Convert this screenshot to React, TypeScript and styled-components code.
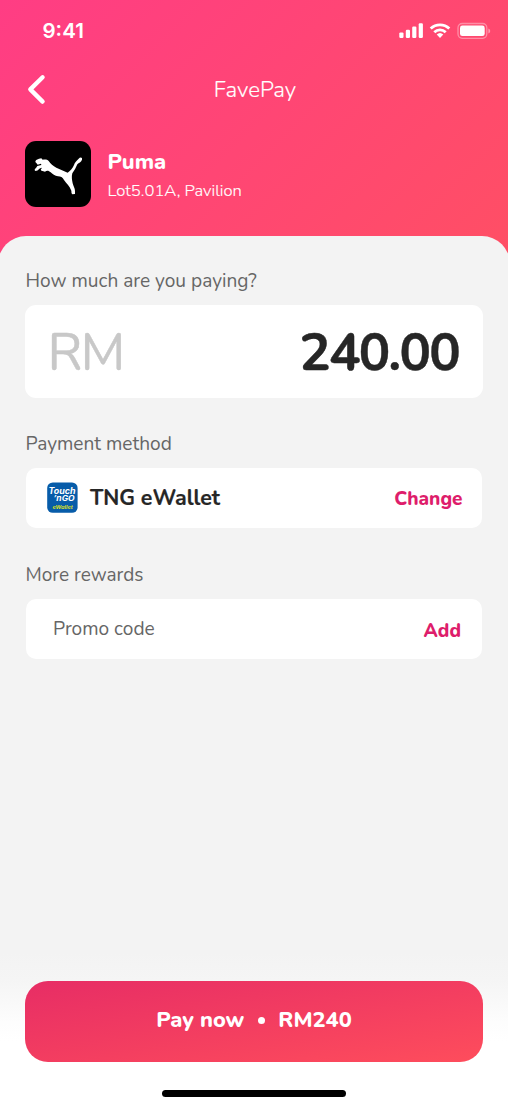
import React from "react";
import styled, { createGlobalStyle } from "styled-components";

const GlobalStyle = createGlobalStyle`
  *, *::before, *::after { box-sizing: border-box; }
  body { margin: 0; background: #fff; }
  button { border: 0; padding: 0; background: none; font: inherit; color: inherit; }
`;

const Screen = styled.div`
  width: 508px;
  height: 1106px;
  overflow: hidden;
  display: flex;
  flex-direction: column;
  background: linear-gradient(135deg, #ff3d84 0%, #ff4f64 100%) top / 100% 270px no-repeat, #fff;
  font-family: Nunito, Lato, "Open Sans", sans-serif;
`;

const StatusBar = styled.div`
  height: 60px;
  display: flex;
  align-items: center;
  justify-content: space-between;
  padding: 1px 17px 0 42.5px;
  color: #fff;
`;

const Clock = styled.span`
  font: 600 20.5px/24px Inter, sans-serif;
  letter-spacing: 0;
`;

const NavBar = styled.header`
  height: 58px;
  display: grid;
  grid-template-columns: 74px 1fr 74px;
  align-items: center;
  color: #fff;
`;

const BackButton = styled.button`
  width: 24px;
  height: 32px;
  margin-left: 25px;
  svg { display: block; }
`;

const Text = styled.span<{
  $size: number;
  $weight?: number;
  $color?: string;
  $track?: number;
  $stroke?: number;
}>`
  display: block;
  white-space: nowrap;
  font-size: ${(p) => p.$size}px;
  line-height: 28px;
  font-weight: ${(p) => p.$weight ?? 400};
  color: ${(p) => p.$color ?? "inherit"};
  letter-spacing: ${(p) => p.$track ?? 0}px;
  -webkit-text-stroke: ${(p) => p.$stroke ?? 0}px currentColor;
`;

const NavTitle = styled(Text)`
  padding: 1px 0 0 2px;
  text-align: center;
`;

const Merchant = styled.section`
  height: 118px;
  padding: 23px 25px 0;
  display: flex;
  gap: 16.5px;
  color: #fff;
`;

const MerchantLogo = styled.div`
  width: 66px;
  height: 66px;
  border-radius: 11px;
  background: #000;
  svg { display: block; }
`;

const MerchantInfo = styled.div`
  display: flex;
  flex-direction: column;
  padding-top: 7px;
  gap: 1px;
`;

const Sheet = styled.main`
  flex: 1;
  margin: 0 -2px;
  padding: 31px 27px 0;
  display: flex;
  flex-direction: column;
  background: #f3f3f3;
  border-radius: 28px 28px 0 0;
`;

const Field = styled.section<{ $gap: number }>`
  margin-bottom: ${(p) => p.$gap}px;
`;

const FieldLabel = styled(Text)`
  margin-bottom: 10px;
  padding-left: 0.5px;
`;

const AmountCard = styled.div`
  height: 93px;
  padding: 3px 24px 0 22.5px;
  display: flex;
  align-items: center;
  justify-content: space-between;
  background: #fff;
  border-radius: 11px;
`;

const RowCard = styled.div<{ $left: number; $right?: number }>`
  height: 60px;
  margin: 0 1px;
  padding: 0 ${(p) => p.$right ?? 19.5}px 0 ${(p) => p.$left}px;
  display: flex;
  align-items: center;
  background: #fff;
  border-radius: 10px;
`;

const WalletLogo = styled.div`
  width: 31px;
  height: 31px;
  margin: -1px 12px 0 0;
  svg { display: block; }
`;

const RowAction = styled.button<{ $drop?: number }>`
  margin-left: auto;
  padding-top: ${(p) => p.$drop ?? 0}px;
`;

const Footer = styled.footer`
  height: 154px;
  padding: 29px 25px 0;
  display: flex;
  flex-direction: column;
  align-items: center;
  background: linear-gradient(#f3f3f3 0%, #f5f5f5 18%, #fdfdfd 46%, #fff 58%);
`;

const PayButton = styled.button`
  width: 457.5px;
  height: 80.5px;
  padding-bottom: 2px;
  display: flex;
  align-items: center;
  justify-content: center;
  border-radius: 23px;
  color: #fff;
  background: linear-gradient(170deg, #e72d65 0%, #fe4d5c 100%);
`;

const Dot = styled.i`
  width: 7px;
  height: 7px;
  margin: 1px 13.5px 0;
  border-radius: 50%;
  background: #fff;
`;

const HomeIndicator = styled.div`
  width: 184.5px;
  height: 7px;
  margin-top: 28.5px;
  border-radius: 4px;
  background: #000;
`;

const StatusIcons = () => (
  <svg width="94" height="20" viewBox="397 21 94 20" fill="#fff">
    <rect x="399.3" y="32.4" width="4.2" height="5.6" rx="1.2" />
    <rect x="405.8" y="29.8" width="4.2" height="8.2" rx="1.2" />
    <rect x="412.2" y="26.6" width="4.2" height="11.4" rx="1.2" />
    <rect x="418.7" y="23.3" width="4.2" height="14.7" rx="1.2" />
    <g fill="none" stroke="#fff" strokeWidth="2.8">
      <path d="M430.7 28.6a13.4 13.4 0 0 1 18.6 0" />
      <path d="M434.3 32.2a8.2 8.2 0 0 1 11.4 0" />
    </g>
    <path d="M440 38l-3.3-3.4a4.8 4.8 0 0 1 6.6 0z" />
    <rect x="458" y="23.5" width="28.8" height="14.8" rx="4.2" fill="none" stroke="#fff" strokeOpacity=".38" strokeWidth="1.3" />
    <rect x="460" y="25.6" width="24.7" height="10.5" rx="2.4" />
    <path d="M488.4 28.4c2.4 1 2.4 4 0 5z" opacity=".45" />
  </svg>
);

const BackIcon = () => (
  <svg width="24" height="32" viewBox="0 0 24 32" fill="none" stroke="#fff" strokeWidth="4.3" strokeLinecap="round" strokeLinejoin="round">
    <path d="M17.6 4.2 5.3 16.4l12.3 12.2" />
  </svg>
);

const PumaIcon = () => (
  <svg width="66" height="66" viewBox="15 33 198 198" fill="#fff">
    <path d="M46 96C47 88 53 89 57 86L64 85L68 89C73 89 81 87 86 93C92 102 99 108 109 113C120 118 132 123 143 128C152 122 158 115 162 105C164 97 170 92 176 86C180 81 188 81 186 89C184 97 176 98 172 103C168 113 163 122 157 130C154 140 156 150 158 160C160 168 165 176 165 183L165 192L157 193C152 188 156 184 153 180C149 168 139 161 132 150C128 141 122 140 114 139C105 138 97 132 92 127C86 121 80 121 75 125L65 122C60 120 64 115 67 113C61 113 57 116 54 121L47 123C42 121 44 117 48 114L52 108L64 105L63 101L53 104L49 99Z" />
  </svg>
);

const WalletIcon = () => (
  <svg width="31" height="31" viewBox="0 0 31 31">
    <rect x=".2" y=".4" width="30.4" height="30.4" rx="5.6" fill="#075ca9" />
    <g fontFamily='Inter, "Liberation Sans", sans-serif' fontStyle="italic" fontWeight="700">
      <text x="1.6" y="12.4" fontSize="8.6" fill="#fff" textLength="27" lengthAdjust="spacingAndGlyphs">Touch</text>
      <text x="6.6" y="19.3" fontSize="7.6" fill="#fff" textLength="21" lengthAdjust="spacingAndGlyphs">’nGO</text>
      <text x="5.4" y="26.9" fontSize="5" fill="#d5df27" textLength="20.5" lengthAdjust="spacingAndGlyphs">eWallet</text>
    </g>
  </svg>
);

export default function App() {
  return (
    <>
      <GlobalStyle />
      <Screen>
        <StatusBar>
          <Clock>9:41</Clock>
          <StatusIcons />
        </StatusBar>
        <NavBar>
          <BackButton aria-label="Back"><BackIcon /></BackButton>
          <NavTitle $size={22.3} $weight={300} $stroke={0.15}>FavePay</NavTitle>
        </NavBar>
        <Merchant>
          <MerchantLogo><PumaIcon /></MerchantLogo>
          <MerchantInfo>
            <Text $size={21.8} $weight={800}>Puma</Text>
            <Text $size={16.6} $weight={300} $stroke={0.15}>Lot5.01A, Pavilion</Text>
          </MerchantInfo>
        </Merchant>
        <Sheet>
          <Field $gap={32}>
            <FieldLabel $size={19.1} $color="#666">How much are you paying?</FieldLabel>
            <AmountCard>
              <Text $size={52.5} $weight={400} $color="#c8c8c8" $track={-2} $stroke={0.4}>RM</Text>
              <Text $size={52.5} $weight={700} $color="#262626" $track={-1.8} $stroke={0.4}>240.00</Text>
            </AmountCard>
          </Field>
          <Field $gap={33}>
            <FieldLabel $size={19.1} $color="#666">Payment method</FieldLabel>
            <RowCard $left={21}>
              <WalletLogo><WalletIcon /></WalletLogo>
              <Text $size={21.4} $weight={700} $color="#262626" $stroke={0.2}>TNG eWallet</Text>
              <RowAction $drop={1}><Text $size={19} $weight={800} $color="#de1d6b">Change</Text></RowAction>
            </RowCard>
          </Field>
          <Field $gap={0}>
            <FieldLabel $size={19} $color="#666">More rewards</FieldLabel>
            <RowCard $left={27} $right={21}>
              <Text $size={19.1} $color="#666">Promo code</Text>
              <RowAction $drop={3}><Text $size={19} $weight={800} $color="#de1d6b">Add</Text></RowAction>
            </RowCard>
          </Field>
        </Sheet>
        <Footer>
          <PayButton>
            <Text $size={21.8} $weight={800}>Pay now</Text>
            <Dot />
            <Text $size={21.8} $weight={800}>RM240</Text>
          </PayButton>
          <HomeIndicator />
        </Footer>
      </Screen>
    </>
  );
}
